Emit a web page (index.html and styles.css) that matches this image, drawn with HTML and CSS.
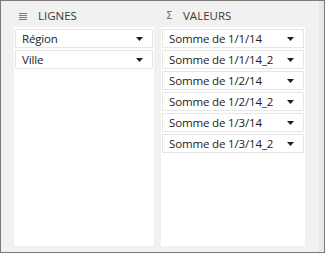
FILE: index.html
```html
<!DOCTYPE html>
<html lang="fr">
<head>
    <meta charset="UTF-8">
    <title>Zones de tableau croisé</title>
    <link rel="stylesheet" href="styles.css">
</head>
<body>
    <div class="pane">
        <div class="areas">
            <div class="area area-rows">
                <div class="area-head">
                    <svg class="head-icon" width="8" height="7" viewBox="0 0 8 7">
                        <rect x="0" y="0" width="8" height="1" fill="#7a7a7a"/>
                        <rect x="0" y="2" width="8" height="1" fill="#7a7a7a"/>
                        <rect x="0" y="4" width="8" height="1" fill="#7a7a7a"/>
                        <rect x="0" y="6" width="8" height="1" fill="#7a7a7a"/>
                    </svg>
                    <span class="head-label">LIGNES</span>
                </div>
                <div class="area-box">
                    <div class="field"><span>Région</span><svg class="caret" width="7" height="4" viewBox="0 0 7 4"><polygon points="0,0 7,0 3.5,4" fill="#1e1e1e"/></svg></div>
                    <div class="field"><span>Ville</span><svg class="caret" width="7" height="4" viewBox="0 0 7 4"><polygon points="0,0 7,0 3.5,4" fill="#1e1e1e"/></svg></div>
                </div>
            </div>
            <div class="area area-values">
                <div class="area-head">
                    <span class="sigma">Σ</span>
                    <span class="head-label">VALEURS</span>
                </div>
                <div class="area-box">
                    <div class="field"><span>Somme de 1/1/14</span><svg class="caret" width="7" height="4" viewBox="0 0 7 4"><polygon points="0,0 7,0 3.5,4" fill="#1e1e1e"/></svg></div>
                    <div class="field"><span>Somme de 1/1/14_2</span><svg class="caret" width="7" height="4" viewBox="0 0 7 4"><polygon points="0,0 7,0 3.5,4" fill="#1e1e1e"/></svg></div>
                    <div class="field"><span>Somme de 1/2/14</span><svg class="caret" width="7" height="4" viewBox="0 0 7 4"><polygon points="0,0 7,0 3.5,4" fill="#1e1e1e"/></svg></div>
                    <div class="field"><span>Somme de 1/2/14_2</span><svg class="caret" width="7" height="4" viewBox="0 0 7 4"><polygon points="0,0 7,0 3.5,4" fill="#1e1e1e"/></svg></div>
                    <div class="field"><span>Somme de 1/3/14</span><svg class="caret" width="7" height="4" viewBox="0 0 7 4"><polygon points="0,0 7,0 3.5,4" fill="#1e1e1e"/></svg></div>
                    <div class="field"><span>Somme de 1/3/14_2</span><svg class="caret" width="7" height="4" viewBox="0 0 7 4"><polygon points="0,0 7,0 3.5,4" fill="#1e1e1e"/></svg></div>
                </div>
            </div>
        </div>
        <div class="scroll-strip"></div>
    </div>
</body>
</html>
```

FILE: styles.css
```css
body {
    margin: 0;
    background: #ffffff;
    font-family: 'Open Sans', 'Noto Sans', sans-serif;
}
.pane {
    width: 325px;
    height: 253px;
    box-sizing: border-box;
    border: 1px solid #7b7b7b;
    background: #f1f1f1;
    display: flex;
}
.areas {
    flex: 1;
    display: flex;
    gap: 7px;
    padding: 0 0 6px 13px;
}
.scroll-strip {
    width: 5px;
    background: #e8e8e8;
}
.area {
    display: flex;
    flex-direction: column;
}
.area-rows {
    width: 140px;
}
.area-values {
    width: 144px;
}
.area-head {
    height: 22px;
    padding: 4px 0 0 5px;
    display: flex;
    align-items: center;
}
.head-icon {
    display: block;
    margin-right: 11px;
}
.sigma {
    font-family: 'DejaVu Sans', sans-serif;
    font-size: 10px;
    color: #707070;
    width: 7px;
    margin-right: 10px;
    line-height: 1;
}
.head-label {
    font-size: 11.5px;
    color: #3a3a3a;
    line-height: 1;
}
.area-box {
    flex: 1;
    background: #ffffff;
    padding: 2px 1px;
}
.field {
    height: 19px;
    box-sizing: border-box;
    border: 1px solid #e6e6e6;
    margin-bottom: 2px;
    padding: 0 9px 0 6px;
    display: flex;
    align-items: center;
    justify-content: space-between;
    font-size: 11.5px;
    letter-spacing: -0.15px;
    color: #222222;
}
.caret {
    display: block;
}
```
